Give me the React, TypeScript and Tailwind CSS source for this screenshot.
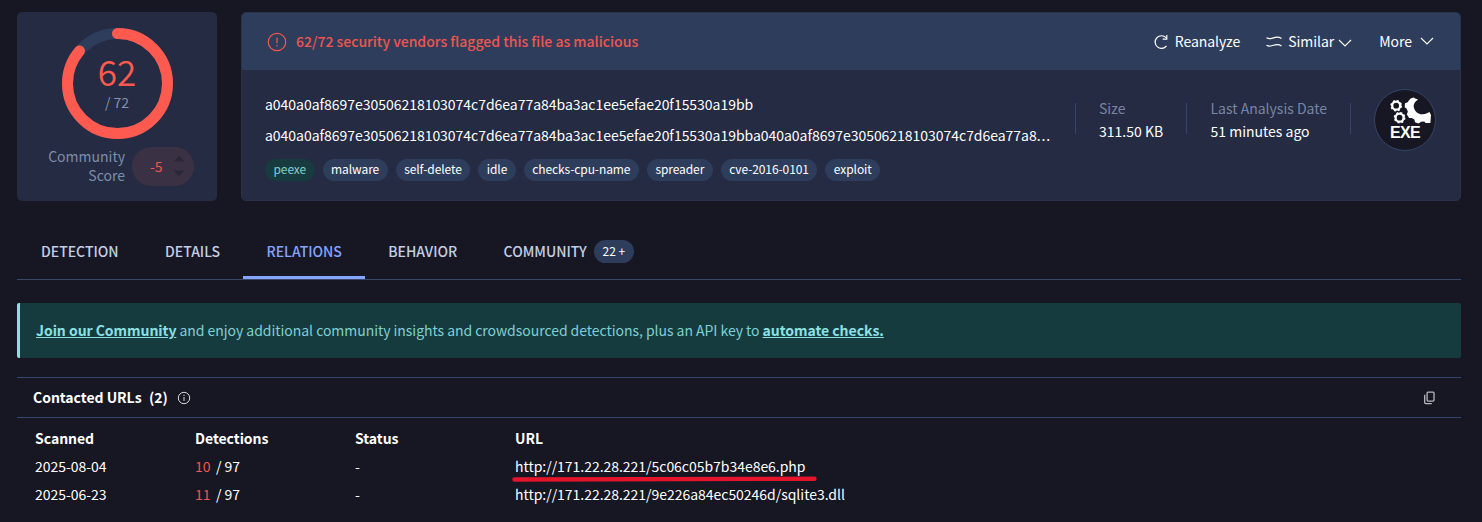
import React from 'react';

const tags = ['malware', 'self-delete', 'idle', 'checks-cpu-name', 'spreader', 'cve-2016-0101', 'exploit'];

const rows = [
  { scanned: '2025-08-04', hits: 10, total: 97, status: '-', url: 'http://171.22.28.221/5c06c05b7b34e8e6.php', marked: true },
  { scanned: '2025-06-23', hits: 11, total: 97, status: '-', url: 'http://171.22.28.221/9e226a84ec50246d/sqlite3.dll', marked: false },
];

const sha = 'a040a0af8697e30506218103074c7d6ea77a84ba3ac1ee5efae20f15530a19bb';

function ScoreRing() {
  const r = 50;
  const c = 2 * Math.PI * r;
  return (
    <div className="relative mt-4 h-[111px] w-[111px]">
      <svg width="111" height="111" viewBox="0 0 111 111" fill="none" strokeWidth="11">
        <circle cx="55.5" cy="55.5" r={r} stroke="#2e3d5c" />
        <circle
          cx="55.5"
          cy="55.5"
          r={r}
          stroke="#ff5a50"
          strokeLinecap="round"
          strokeDasharray={`${(c * 62) / 72} ${c}`}
          transform="rotate(-90 55.5 55.5)"
        />
      </svg>
      <div className="absolute inset-0 flex flex-col items-center pt-[21px]">
        <span className="text-[35px] font-[350] leading-[44px] text-[#ff5a50]">62</span>
        <span className="text-[14px] leading-[18px] text-[#8392b0]">/ 72</span>
      </div>
    </div>
  );
}

function Chevron() {
  return (
    <svg width="14" height="8" viewBox="0 0 14 8" fill="none" stroke="#fff" strokeWidth="1.1">
      <path d="M1 1l6 6 6-6" />
    </svg>
  );
}

function ExeIcon() {
  return (
    <div className="flex h-[62px] w-[62px] flex-col items-center rounded-full border border-[#36456a] bg-[#171623]">
      <svg className="ml-[9px] mt-[7px]" width="42" height="28" viewBox="0 0 42 28">
        <g fill="none" stroke="#fff">
          <circle cx="7.2" cy="8.7" r="4" strokeWidth="2.3" />
          <circle cx="7.2" cy="8.7" r="5.1" strokeWidth="1.5" strokeDasharray="2 2.005" />
          <circle cx="10.6" cy="20.7" r="4" strokeWidth="2.3" />
          <circle cx="10.6" cy="20.7" r="5.1" strokeWidth="1.5" strokeDasharray="2 2.005" />
        </g>
        <path
          fill="#fff"
          d="M22 1.2L24.8.6l1.4 1L29 2.6C25.8 5 24 7.700 25 11c1 4 4.800 6.700 9 6.200 2.600-.2 4.200-.9 6.500-2.200L42 18l-.6 8h-4.800l-1.300-1.600-3.300.4-2.400 1.800-3.600-1.300-.6-2.700-2.600-1.700-2.700.1-2.300-3.700 1.100-2.500-1.200-3-2-1.600.3-4 2.700-1 1.500-2.200z"
        />
      </svg>
      <span className="font-['Liberation_Sans',sans-serif] text-[16px] font-bold leading-[16px] tracking-[-0.7px] text-white">EXE</span>
    </div>
  );
}

function Tab({ label, active, badge }: { label: string; active?: boolean; badge?: string }) {
  return (
    <div className={`relative flex h-full items-center px-[23.2px] pb-[2px] text-[14px] font-medium ${active ? 'text-[#84a4ff]' : 'text-[#c3cee3]'}`}>
      {label}
      {badge && (
        <span className="ml-[7px] flex h-[23px] w-10 items-center justify-center rounded-full bg-[#2e3d5c] text-[12px] font-normal text-white">
          {badge}
        </span>
      )}
      {active && <span className="absolute inset-x-0 bottom-0 h-[3px] bg-[#84a4ff]" />}
    </div>
  );
}

export default function App() {
  return (
    <main className="h-[522px] w-[1482px] overflow-hidden bg-[#171623] pl-[17px] pr-[21px] pt-3 font-['Noto_Sans_CJK_SC',sans-serif] text-[14px] text-white">
      <section className="flex h-[189px] gap-6">
        <div className="flex w-[200px] flex-col items-center rounded-[5px] bg-[#242b42]">
          <ScoreRing />
          <div className="mt-2 flex items-center self-end pr-[23px]">
            <div className="-mt-[2px] text-right leading-[19px] text-[#7f8dab]">
              Community
              <br />
              Score
            </div>
            <div className="ml-[7px] flex h-[39px] w-[62px] items-center rounded-full bg-[#3b3144] pl-[18px] text-[#f0554f]">
              -5
              <svg className="-mt-[2px] ml-[10px]" width="12" height="22" viewBox="0 0 12 22" fill="#292738">
                <path d="M.5 6.500L6 1l5.500 5.500zM.5 15.500L6 21l5.500-5.500z" />
              </svg>
            </div>
          </div>
        </div>

        <div className="flex flex-1 flex-col overflow-hidden rounded-[5px] border border-[#28324b] bg-[#242b42]">
          <header className="flex h-[57px] items-center bg-[#2e3d5c] pl-[25px] pr-[26px]">
            <svg width="20" height="20" viewBox="0 0 20 20" fill="none" stroke="#f0554f">
              <circle cx="10" cy="10" r="8.700" strokeWidth="1.2" />
              <path d="M10 5.500v5.700M10 13v1.600" strokeWidth="1.300" />
            </svg>
            <span className="ml-[9px] font-medium text-[#f0554f]">62/72 security vendors flagged this file as malicious</span>
            <div className="ml-auto flex items-center tracking-[-0.03px]">
              <svg width="16" height="16" viewBox="0 0 16 16" fill="none" stroke="#fff" strokeWidth="1.200">
                <path d="M13.500 11.800A6.300 6.300 0 1 1 13 3.700M13.800 1v4.200H9.700" />
              </svg>
              <span className="ml-[6px]">Reanalyze</span>
              <svg className="ml-[26px]" width="16" height="12" viewBox="0 0 16 12" fill="none" stroke="#fff" strokeWidth="1.200">
                <path d="M.5 1.800C3 3.200 4.500 3 7.500 1.900s5.500-1 8 .7M.5 9.200C3 10.600 4.500 10.400 7.500 9.300s5.500-1 8 .7" />
              </svg>
              <span className="ml-[6px]">Similar</span>
              <span className="ml-[4px] mt-[3px]"><Chevron /></span>
              <span className="ml-[27px]">More</span>
              <span className="-mt-[2px] ml-[8px]"><Chevron /></span>
            </div>
          </header>

          <div className="flex flex-1 pl-[23px] pr-6">
            <div className="w-[790px] pt-[19px] tracking-[-0.03px]">
              <p className="leading-[31px]">{sha}</p>
              <p className="whitespace-nowrap leading-[31px]">
                {sha + sha.slice(0, 37)}
                <span className="tracking-[0.9px]">...</span>
              </p>
              <div className="mt-[8px] flex gap-2 text-[12px] tracking-[-0.09px]">
                <span className="flex h-[22px] items-center rounded-full bg-[#173b3e] px-[8.500px] pb-[2px] text-[#7fcfce]">peexe</span>
                {tags.map((t) => (
                  <span key={t} className="flex h-[22px] items-center rounded-full bg-[#2e3d5c] px-[8.500px] pb-[2px]">{t}</span>
                ))}
              </div>
            </div>
            <div className="ml-auto mt-[19px] flex h-[62px] items-center leading-[23px]">
              <div className="-mt-[3px] h-[31px] w-px bg-[#36456a]" />
              <div className="ml-[23px] w-[87px]">
                <p className="text-[#7885a3]">Size</p>
                <p>311.50 KB</p>
              </div>
              <div className="-mt-[3px] h-[31px] w-px bg-[#36456a]" />
              <div className="ml-[23.500px] w-[139.500px]">
                <p className="text-[#7885a3]">Last Analysis Date</p>
                <p>51 minutes ago</p>
              </div>
              <div className="-mt-[3px] h-[31px] w-px bg-[#36456a]" />
              <div className="ml-[23px]"><ExeIcon /></div>
            </div>
          </div>
        </div>
      </section>

      <nav className="mt-6 flex h-[55px] border-b border-[#3b4766] pl-[0.8px]">
        <Tab label="DETECTION" />
        <Tab label="DETAILS" />
        <Tab label="RELATIONS" active />
        <Tab label="BEHAVIOR" />
        <Tab label="COMMUNITY" badge="22 +" />
      </nav>

      <aside className="mt-[23px] flex h-[55px] items-center whitespace-pre rounded-[2px] border-l-[3px] border-[#8be0e3] bg-[#163b3e] pl-4 tracking-[-0.04px] text-[#80cfd2]">
        <a className="font-bold text-[#8be0e3] underline">Join our Community</a>
        {' and enjoy additional community insights and crowdsourced detections, plus an API key to '}
        <a className="font-bold text-[#8be0e3] underline">automate checks.</a>
      </aside>

      <section className="mt-[19px] tracking-[-0.03px]">
        <div className="flex h-[41px] items-center border-y border-[#36456a] pl-4 pr-[25px] font-bold">
          <span>Contacted URLs</span>
          <span className="ml-[7.500px]">(2)</span>
          <svg className="ml-[9px]" width="14" height="14" viewBox="0 0 14 14" fill="none" stroke="#d8d8dc">
            <circle cx="7" cy="7" r="5.700" />
            <path d="M7 6v4M7 3.700v1.300" />
          </svg>
          <svg className="ml-auto" width="12" height="14" viewBox="0 0 12 14" fill="none" stroke="#b8b8be" strokeWidth="1.300">
            <rect x="3.100" y="1.100" width="6.900" height="9" rx="1" />
            <path d="M.7 3.800v7.700q0 1.100 1.100 1.100h6" />
          </svg>
        </div>
        <div className="grid grid-cols-[160px_160px_160px_1fr] pl-[18px] pt-[6px] leading-[28px]">
          <b>Scanned</b>
          <b>Detections</b>
          <b>Status</b>
          <b>URL</b>
          {rows.map((row) => (
            <React.Fragment key={row.scanned}>
              <span>{row.scanned}</span>
              <span><span className="mr-[5.500px] text-[#f0554f]">{row.hits}</span>/ {row.total}</span>
              <span>{row.status}</span>
              <span className="relative">
                {row.url}
                {row.marked && (
                  <svg className="absolute -left-[4px] top-[22px]" width="308" height="8" viewBox="0 0 308 8">
                    <path d="M3.500 5.500L303.500 4.800" stroke="#e3142b" strokeWidth="4.400" strokeLinecap="round" />
                  </svg>
                )}
              </span>
            </React.Fragment>
          ))}
        </div>
      </section>
    </main>
  );
}
